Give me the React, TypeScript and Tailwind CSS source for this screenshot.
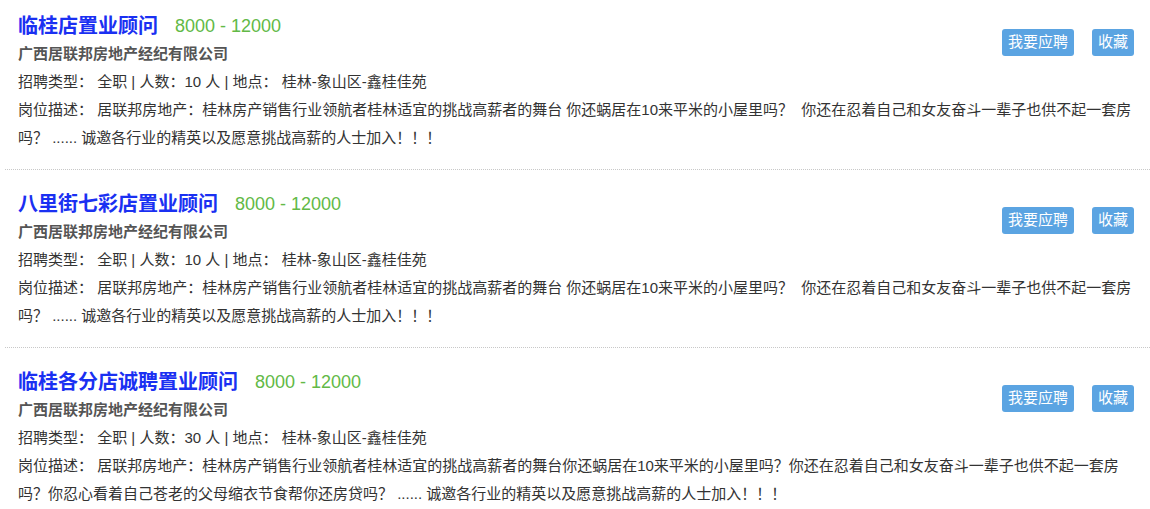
import React from "react";

type Job = {
  title: string;
  salary: string;
  company: string;
  count: number;
  place: string;
  desc: string;
};

const jobs: Job[] = [
  {
    title: "临桂店置业顾问",
    salary: "8000 - 12000",
    company: "广西居联邦房地产经纪有限公司",
    count: 10,
    place: "桂林-象山区-鑫桂佳苑",
    desc: "居联邦房地产：桂林房产销售行业领航者桂林适宜的挑战高薪者的舞台 你还蜗居在10来平米的小屋里吗？  你还在忍着自己和女友奋斗一辈子也供不起一套房吗？ ...... 诚邀各行业的精英以及愿意挑战高薪的人士加入！！！",
  },
  {
    title: "八里街七彩店置业顾问",
    salary: "8000 - 12000",
    company: "广西居联邦房地产经纪有限公司",
    count: 10,
    place: "桂林-象山区-鑫桂佳苑",
    desc: "居联邦房地产：桂林房产销售行业领航者桂林适宜的挑战高薪者的舞台 你还蜗居在10来平米的小屋里吗？  你还在忍着自己和女友奋斗一辈子也供不起一套房吗？ ...... 诚邀各行业的精英以及愿意挑战高薪的人士加入！！！",
  },
  {
    title: "临桂各分店诚聘置业顾问",
    salary: "8000 - 12000",
    company: "广西居联邦房地产经纪有限公司",
    count: 30,
    place: "桂林-象山区-鑫桂佳苑",
    desc: "居联邦房地产：桂林房产销售行业领航者桂林适宜的挑战高薪者的舞台你还蜗居在10来平米的小屋里吗？你还在忍着自己和女友奋斗一辈子也供不起一套房吗？你忍心看着自己苍老的父母缩衣节食帮你还房贷吗？ ...... 诚邀各行业的精英以及愿意挑战高薪的人士加入！！！",
  },
];

function JobItem({ job, first }: { job: Job; first: boolean }) {
  return (
    <div
      className={`ml-[5px] pl-[13px] pr-[16px] pb-[17px] border-b border-dotted border-[#c8c8c8] text-[15px] ${
        first ? "pt-3" : "pt-5"
      }`}
    >
      {/* Actions, floated like the old page did */}
      <div className="float-right flex gap-[18px] mt-[17px]">
        <button className="h-[27px] px-1.5 rounded-[3px] bg-[#5ba4e2] text-white text-[15px]">
          我要应聘
        </button>
        <button className="h-[27px] px-1.5 rounded-[3px] bg-[#5ba4e2] text-white text-[15px]">
          收藏
        </button>
      </div>

      <div className="flex items-center h-[28px]">
        <a className="text-[20px] font-bold text-[#1a30f2] cursor-pointer">{job.title}</a>
        <span className="ml-[17px] text-[18px] text-[#62b946]">{job.salary}</span>
      </div>
      <p className="leading-[28px] font-bold text-[#555]">{job.company}</p>
      <p className="leading-[28px] text-[#333]">
        招聘类型： 全职 | 人数：{job.count} 人 | 地点： {job.place}
      </p>
      <p className="leading-[28px] text-[#333] whitespace-pre-wrap">
        {"岗位描述： " + job.desc}
      </p>
    </div>
  );
}

export default function App() {
  return (
    <div
      className="w-[1150px] h-[509px] overflow-hidden bg-white"
      style={{ fontFamily: '"Liberation Sans", "Noto Sans CJK SC", sans-serif' }}
    >
      {jobs.map((job, i) => (
        <JobItem key={i} job={job} first={i === 0} />
      ))}
    </div>
  );
}
